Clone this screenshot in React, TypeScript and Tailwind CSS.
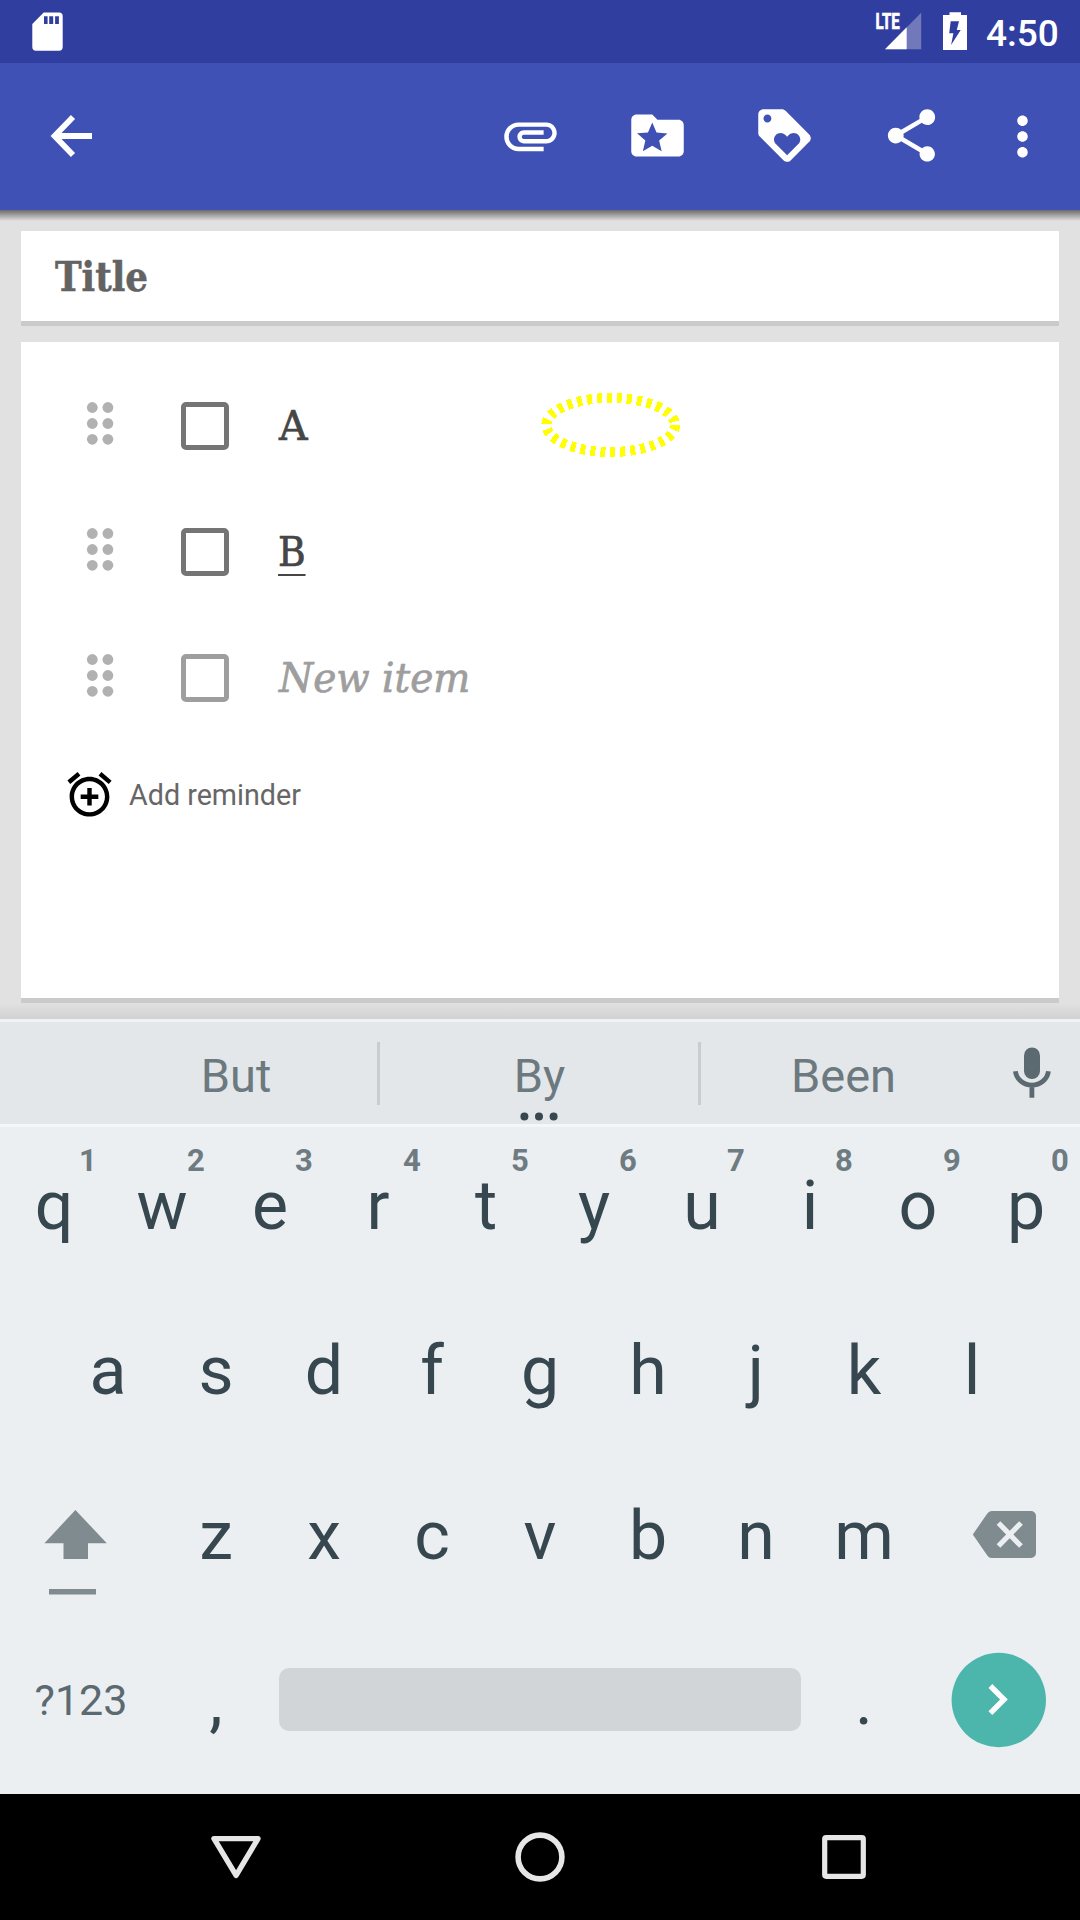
import React from "react";

const slab = "font-['Roboto_Slab','DejaVu_Serif_Condensed','DejaVu_Serif',serif]";

type IconProps = { box: string; className: string; children: React.ReactNode };

function Drawing({ box, className, children }: IconProps) {
  return (
    <svg viewBox={box} className={`block shrink-0 ${className}`}>
      {children}
    </svg>
  );
}

function MaterialIcon({ d, className }: { d: string; className: string }) {
  return (
    <svg viewBox="0 0 24 24" className={`block shrink-0 ${className}`} fill="currentColor">
      <path d={d} />
    </svg>
  );
}

const paths = {
  attachment:
    "M2 12.5C2 9.46 4.46 7 7.5 7H18c2.21 0 4 1.79 4 4s-1.79 4-4 4H9.5C8.12 15 7 13.88 7 12.5S8.12 10 9.5 10H17v1.7H9.41c-.95 0-.95 1.6 0 1.6H18c1.3 0 2.3-1.1 2.3-2.3s-1-2.3-2.3-2.3H7.5C5.4 8.7 3.7 10.4 3.7 12.5S5.4 16.3 7.5 16.3H17v1.7H7.5C4.46 18 2 15.54 2 12.5z",
  folder:
    "M20 6h-8l-2-2H4c-1.1 0-1.99.9-1.99 2L2 18c0 1.1.9 2 2 2h16c1.1 0 2-.9 2-2V8c0-1.1-.9-2-2-2zm-6.42 12L10 15.9 6.42 18l.95-4.07-3.16-2.74 4.16-.36L10 7l1.63 3.84 4.16.36-3.16 2.74.95 4.06z",
  loyalty:
    "M21.41 11.58l-9-9C12.05 2.22 11.55 2 11 2H4c-1.1 0-2 .9-2 2v7c0 .55.22 1.05.59 1.42l9 9c.36.36.86.58 1.41.58.55 0 1.05-.22 1.41-.59l7-7c.37-.36.59-.86.59-1.41 0-.55-.23-1.06-.59-1.42zM5.5 7C4.67 7 4 6.33 4 5.5S4.67 4 5.5 4 7 4.67 7 5.5 6.33 7 5.5 7zm11.77 8.27L13 19.54l-4.27-4.27C8.28 14.81 8 14.19 8 13.5c0-1.38 1.12-2.5 2.5-2.5.69 0 1.32.28 1.77.74l.73.72.73-.73c.45-.45 1.08-.73 1.77-.73 1.38 0 2.5 1.12 2.5 2.5 0 .69-.28 1.32-.73 1.77z",
  share:
    "M18 16.08c-.76 0-1.44.3-1.96.77L8.91 12.7c.05-.23.09-.46.09-.7s-.04-.47-.09-.7l7.05-4.11c.54.5 1.25.81 2.04.81 1.66 0 3-1.34 3-3s-1.34-3-3-3-3 1.34-3 3c0 .24.04.47.09.7L8.04 9.81C7.5 9.31 6.79 9 6 9c-1.66 0-3 1.34-3 3s1.34 3 3 3c.79 0 1.5-.31 2.04-.81l7.12 4.16c-.05.21-.08.43-.08.65 0 1.61 1.31 2.92 2.92 2.92 1.61 0 2.92-1.31 2.92-2.92s-1.31-2.92-2.92-2.92z",
  more: "M12 8c1.1 0 2-.9 2-2s-.9-2-2-2-2 .9-2 2 .9 2 2 2zm0 2c-1.1 0-2 .9-2 2s.9 2 2 2 2-.9 2-2-.9-2-2-2zm0 6c-1.1 0-2 .9-2 2s.9 2 2 2 2-.9 2-2-.9-2-2-2z",
  alarm:
    "M7.88 3.39L6.6 1.86 2 5.71l1.29 1.53 4.59-3.85zM22 5.72l-4.6-3.86-1.29 1.53 4.6 3.86L22 5.72zM12 4c-4.97 0-9 4.03-9 9s4.02 9 9 9c4.97 0 9-4.03 9-9s-4.03-9-9-9zm0 16c-3.87 0-7-3.13-7-7s3.13-7 7-7 7 3.13 7 7-3.13 7-7 7zm1-11h-2v3H8v2h3v3h2v-3h3v-2h-3V9z",
};

function StatusBar() {
  return (
    <div className="flex h-[63px] items-start justify-between bg-[#303f9f] text-white">
      <Drawing box="30 0 36 63" className="ml-[30px] h-[63px] w-[36px]">
        <path
          fill="currentColor"
          fillRule="evenodd"
          d="M43.7 12.4H59a3.7 3.7 0 0 1 3.7 3.7V47a3.7 3.7 0 0 1-3.7 3.7H36a3.7 3.7 0 0 1-3.7-3.7V24zM44 16.3V24h3.6v-7.7zm5.2 0V24h4v-7.7zm5.9 0V24h3.8v-7.7z"
        />
      </Drawing>
      <div className="flex">
        <Drawing box="874 0 96 63" className="h-[63px] w-[96px]">
          <path d="M885 49.3L921.2 12.7V49.3z" fill="#7279bb" />
          <path d="M885 49.3L906.7 27.3V49.3z" fill="#fff" />
          <text
            x="875.6"
            y="29.2"
            fill="#fff"
            stroke="#fff"
            strokeWidth="0.7"
            fontSize="22"
            fontWeight="700"
            textLength="24.2"
            lengthAdjust="spacingAndGlyphs"
            className="font-[Roboto,sans-serif]"
          >
            LTE
          </text>
          <path
            fill="#fff"
            fillRule="evenodd"
            d="M943 15h6.5v-2.8H961V15h6v35h-24zM950.7 21.3L949.2 33.3H953.4L951.1 45L960.7 30H956.8L959 21.3z"
          />
        </Drawing>
        <div className="w-[110px] pl-4 text-[37px] leading-[68px] font-medium">4:50</div>
      </div>
    </div>
  );
}

function Toolbar() {
  return (
    <div className="relative z-10 flex h-[147px] items-center bg-[#3f51b5] pb-[2px] text-white">
      <Drawing box="48 110 48 52" className="ml-12 h-[52px] w-12">
        <path d="M92 136H55M73 117L54.6 136L73 155" fill="none" stroke="currentColor" strokeWidth="5.8" />
      </Drawing>
      <div className="ml-auto flex items-center gap-16 pr-[26px]">
        <MaterialIcon d={paths.attachment} className="size-[63px]" />
        <MaterialIcon d={paths.folder} className="size-[63px]" />
        <MaterialIcon d={paths.loyalty} className="size-[63px]" />
        <MaterialIcon d={paths.share} className="size-[63px]" />
        <MaterialIcon d={paths.more} className="mt-[2px] -ml-[16px] size-[63px]" />
      </div>
      <div className="absolute top-full left-0 h-[11px] w-full bg-linear-to-b from-[#6c6c6c] via-[#a6a6a6] to-[#e1e1e1]" />
    </div>
  );
}

function ListRow({ faded, children }: { faded?: boolean; children: React.ReactNode }) {
  return (
    <div className="flex h-[126px] items-center pl-[65px]">
      <Drawing box="86 401 28 50" className="h-[50px] w-[28px]">
        {[407.5, 423.5, 439.3].map((y) => (
          <g key={y} fill="#b1b1b1">
            <circle cx="92.3" cy={y} r="5.4" />
            <circle cx="107.9" cy={y} r="5.4" />
          </g>
        ))}
      </Drawing>
      <span
        className={`ml-[67px] h-[48px] w-[48px] rounded-[5px] border-[5.4px] ${faded ? "border-[#9e9e9e]" : "border-[#757575]"}`}
      />
      <div
        className={`ml-[50px] text-[41px] leading-[60px] [-webkit-text-stroke:0.7px_currentColor] ${slab} ${faded ? "text-[#9e9e9e]" : "text-[#464646]"}`}
      >
        {children}
      </div>
    </div>
  );
}

function Note() {
  return (
    <div className="h-[809px] bg-[#e1e1e1] px-[21px] pt-[21px]">
      <div className="h-[95px] border-b-[5px] border-[#cacaca] bg-white pl-[34px]">
        <span
          className={`inline-block origin-left scale-x-[0.97] text-[41px] leading-[92px] font-bold text-[#636363] [-webkit-text-stroke:0.5px_currentColor] ${slab}`}
        >
          Title
        </span>
      </div>
      <div className="relative mt-4 h-[661px] border-b-[5px] border-[#cacaca] bg-white pt-[21px]">
        <ListRow>
          <span className="inline-block origin-left scale-x-[1.07]">A</span>
        </ListRow>
        <ListRow>
          <span className="-ml-px inline-block origin-left border-b-2 border-[#464646] leading-[44px] scale-x-[1.02]">B</span>
        </ListRow>
        <ListRow faded>
          <span className="inline-block origin-left scale-x-[1.058] italic">New item</span>
        </ListRow>
        <div className="mt-[26px] flex items-center pl-[42px]">
          <MaterialIcon d={paths.alarm} className="size-[53px] text-black" />
          <span className="ml-[13px] text-[28.7px] leading-[53px] pt-[2px] text-[#666]">Add reminder</span>
        </div>
        <Drawing box="538 390 146 70" className="absolute top-[48px] left-[517px] h-[70px] w-[146px]">
          <ellipse
            cx="610.7"
            cy="425"
            rx="64.3"
            ry="27"
            fill="none"
            stroke="#ff0"
            strokeWidth="10"
            strokeDasharray="5 5"
            shapeRendering="crispEdges"
          />
        </Drawing>
      </div>
      <div className="-mx-[21px] h-4 bg-linear-to-b from-[#e1e1e1] to-[#d2d2d2]" />
    </div>
  );
}

function Suggestions() {
  return (
    <div className="flex h-[108px] items-center border-t-[3px] border-b-[3px] border-t-[#f0f2f4] border-b-[#f4f6f7] bg-[#e3e7ea] text-[47px] text-[#6c797f]">
      <div className="ml-[94px] w-[283px] shrink-0 pt-[5px] pl-px text-center leading-[97px]">But</div>
      <div className="h-[63px] w-[3px] bg-[#c9cdd0]" />
      <div className="relative w-[318px] pt-[5px] pl-px text-center leading-[97px]">
        By
        <Drawing box="518 1110 42 13" className="absolute bottom-px left-[138px] h-[13px] w-[42px]">
          <g fill="#37474f">
            <circle cx="524.4" cy="1116.6" r="4" />
            <circle cx="539" cy="1116.6" r="4" />
            <circle cx="553.6" cy="1116.6" r="4" />
          </g>
        </Drawing>
      </div>
      <div className="h-[63px] w-[3px] bg-[#c9cdd0]" />
      <div className="w-[285px] pt-[5px] text-center leading-[97px]">Been</div>
      <Drawing box="1006 1022 52 102" className="ml-[20px] h-[102px] w-[52px]">
        <rect x="1024" y="1047.5" width="16" height="31.5" rx="8" fill="#5b6970" />
        <path
          d="M1015.4 1071.2A16.6 15.6 0 0 0 1048.4 1071.2M1031.9 1087V1097.8"
          fill="none"
          stroke="#5b6970"
          strokeWidth="4.8"
        />
      </Drawing>
    </div>
  );
}

function Key({ label, hint }: { label: string; hint?: string }) {
  return (
    <div className="relative w-[108px] shrink-0 text-center text-[68px] leading-[165px] text-[#37474f]">
      {label}
      {hint && (
        <span className="absolute top-[17px] left-[64px] w-12 text-center text-[31px] leading-[40px] font-bold text-[#6e7b81]">
          {hint}
        </span>
      )}
    </div>
  );
}

function Keyboard() {
  return (
    <div className="h-[667px] overflow-hidden bg-[#ebeff2]">
      <div className="-mt-[3px] flex h-[165px]">
        {"qwertyuiop".split("").map((c, i) => (
          <Key key={c} label={c} hint={String((i + 1) % 10)} />
        ))}
      </div>
      <div className="flex h-[165px] justify-center">
        {"asdfghjkl".split("").map((c) => (
          <Key key={c} label={c} />
        ))}
      </div>
      <div className="flex h-[165px]">
        <Drawing box="0 1454 162 165" className="h-[165px] w-[162px]">
          <path d="M75.4 1510L106.8 1543.2H88V1559H63.5V1543.2H44.4zM49 1589H96V1594.6H49z" fill="#808b8f" />
        </Drawing>
        {"zxcvbnm".split("").map((c) => (
          <Key key={c} label={c} />
        ))}
        <Drawing box="918 1454 162 165" className="h-[165px] w-[162px]">
          <path
            d="M991.5 1511H1031a5 5 0 0 1 5 5V1553a5 5 0 0 1-5 5H991.5Q989 1558 987.3 1555.5L972.8 1534.5L987.3 1513.5Q989 1511 991.5 1511z"
            fill="#808b8f"
          />
          <path d="M998.5 1523L1021 1546M1021 1523L998.5 1546" stroke="#ebeff2" strokeWidth="5.2" />
        </Drawing>
      </div>
      <div className="flex h-[165px] items-center">
        <div className="mb-[2px] w-[162px] text-center text-[43px] leading-[163px] text-[#5b6970]">?123</div>
        <Key label="," />
        <div className="mx-[9px] mb-1 h-[63px] flex-1 rounded-[10px] bg-[#d1d5d8]" />
        <Key label="." />
        <Drawing box="918 1619 162 165" className="h-[165px] w-[162px]">
          <circle cx="998.8" cy="1700" r="47.2" fill="#4db6ac" />
          <path d="M990.4 1686L1004 1699.5L990.4 1713.2" fill="none" stroke="#fff" strokeWidth="5.4" />
        </Drawing>
      </div>
    </div>
  );
}

function NavigationBar() {
  return (
    <div className="flex h-[126px] items-center justify-center gap-[248px] bg-black text-[#e6e6e6]">
      <Drawing box="208 1829 56 56" className="size-14">
        <path
          d="M214 1838.6H258L236.1 1875.4z"
          fill="none"
          stroke="currentColor"
          strokeWidth="5.4"
          strokeLinejoin="round"
        />
      </Drawing>
      <Drawing box="512 1829 56 56" className="size-14">
        <circle cx="540" cy="1857" r="21.9" fill="none" stroke="currentColor" strokeWidth="5.6" />
      </Drawing>
      <Drawing box="816 1829 56 56" className="size-14">
        <rect x="824.7" y="1837.7" width="38.6" height="38.6" rx="1.5" fill="none" stroke="currentColor" strokeWidth="5.2" />
      </Drawing>
    </div>
  );
}

export default function App() {
  return (
    <div className="h-[1920px] w-[1080px] overflow-hidden bg-[#e1e1e1] font-[Roboto,sans-serif]">
      <StatusBar />
      <Toolbar />
      <Note />
      <Suggestions />
      <Keyboard />
      <NavigationBar />
    </div>
  );
}
